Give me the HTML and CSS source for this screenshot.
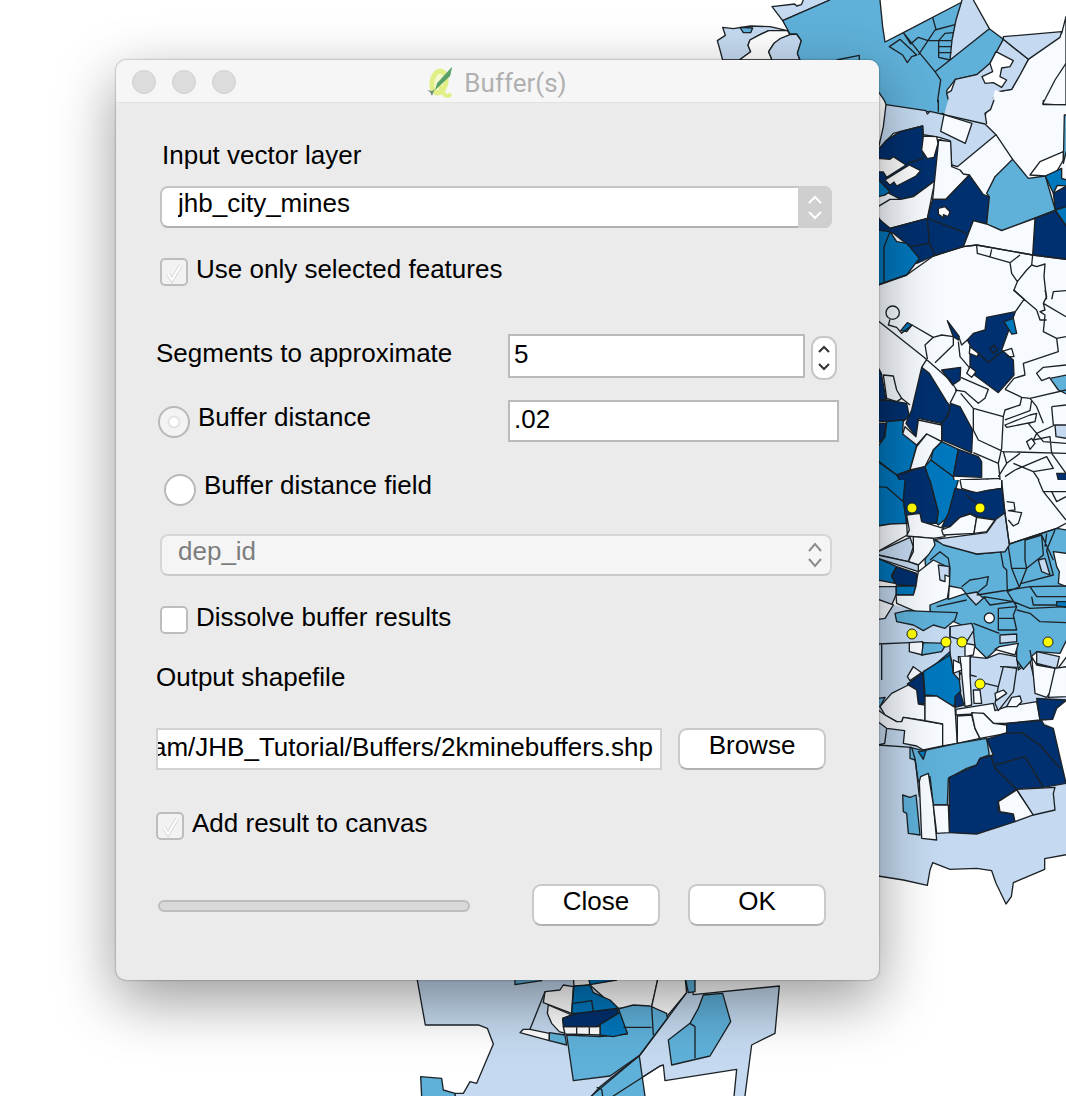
FILE: index.html
```html
<!DOCTYPE html>
<html lang="en">
<head>
<meta charset="utf-8">
<title>Buffer(s)</title>
<link rel="stylesheet" href="styles.css">
</head>
<body>
<main class="desktop">
<svg class="map" viewBox="0 0 1066 1096" preserveAspectRatio="xMinYMin slice" aria-hidden="true">
  <!-- north-west wards -->
  <g transform="translate(700 0) scale(.33333)">
    <path class="a" d="M985 178 1085 100 1098 50V390H850L860 320 895 275 935 268Z"/>
    <path class="b" d="M68 82 100 86 152 78 210 80 262 92 206 92 180 104 150 120 144 136 152 155 118 180H68L60 150 52 122 76 106Z"/>
    <path class="w" d="M262 92 206 92 180 104 150 120 144 136 152 155 118 180H216L206 155 222 130 270 104Z"/>
    <path class="b" d="M270 104 240 116 222 130 206 155 216 180H300L292 160 304 122 290 102Z"/>
    <path class="b" d="M310 0 304 14 290 18 284 12 216 20 248 62 390 0"/>
    <path class="c" d="M120 82 130 98H152L158 84Z"/>
    <path class="c" d="M390 0 248 62 270 102 290 102 304 122 292 160 300 180 535 275 552 300 560 316 735 342 748 310 740 272 766 238 830 224 860 200 880 180 910 118 868 86 786 6 610 98 555 126 548 80 540 0"/>
    <path class="b" d="M786 0 768 60 756 120 750 180 868 86 820 0"/>
    <path class="b" d="M910 118 985 178 960 225 935 268 895 275 860 320 850 375 735 342 748 310 740 280 754 272 766 238 830 224 870 190Z"/>
    <path class="b" d="M910 110 1085 95 1080 112 985 178 910 118Z"/>
    <path class="w" d="M888 155 940 182 930 200 905 204 900 230 920 240 905 262 880 248 855 250 846 230 878 215 870 190Z"/>
    <path class="n" d="M1098 190 1065 240 1028 312 1098 316M698 52 708 88M610 98 660 160 705 215 722 240 708 335M568 140 600 118 650 165 635 170 622 188 608 165ZM705 215 750 180M610 98 632 132 655 112 684 122 655 165M684 122H755M684 122 705 90 765 74M716 122V172L750 180M716 140H755M716 158H755M716 122 735 100 760 98M410 180 478 166V180"/>
  </g>
  <!-- northern wards -->
  <g transform="translate(870 100) scale(.33333)">
    <path class="a f" d="M24 150V610H590V16H520L375 -30 350 72 160 90Z"/>
    <path class="c f" d="M48 14 54 0 200 0 215 40 168 32Z"/>
    <path class="b f" d="M236 -5 375 -5 362 28 345 40 350 72 222 44Z"/>
    <path class="b" d="M48 14 168 32 172 42 180 34 222 44 345 72 378 104 262 200 245 195 240 122 208 112 160 104 158 78 70 100 24 150 40 80Z"/>
    <path class="a" d="M222 44 306 70 286 130 212 94Z"/>
    <path class="e" d="M158 78 160 170 206 120H215L200 240 128 290 92 298 24 262V150L50 120 90 95Z"/>
    <path class="w" d="M160 108 200 110 204 130 192 172 172 176 155 150Z"/>
    <path class="w" d="M24 175 60 178 70 170 108 195 50 232 40 216 24 215Z"/>
    <path class="w" d="M45 240 118 195 152 212 138 228 80 258 72 246 60 256Z"/>
    <path class="d" d="M24 238 60 275 45 285 24 290Z"/>
    <path class="a" d="M24 320 60 298 92 298 130 290 195 242 172 355 60 385 40 375 24 350Z"/>
    <path class="a" d="M206 120 242 125 245 200 270 210 280 222 298 225 228 298H188Z"/>
    <path class="e" d="M298 225 340 284 358 290 350 372 310 362 280 440 190 468 140 490 120 440 70 400 24 390V355L60 385 172 355 188 298H228Z"/>
    <path class="w" d="M205 325 225 320 240 335 234 350 220 344 222 355 205 342Z"/>
    <path class="d" d="M24 390 60 395 80 425 110 430 148 475 110 525 24 555Z"/>
    <path class="c" d="M428 178 475 235 526 228 556 330 395 392 350 372 358 290 350 280 375 230Z"/>
    <path class="w" d="M580 155 510 185 480 225 526 228 560 215 580 180Z"/>
    <path class="c" d="M583 45H590V150L580 190Z"/>
    <path class="d" d="M526 228 575 205 575 235 590 240V258L562 256 550 280Z"/>
    <path class="e" d="M550 280 590 258V320L556 330Z"/>
    <path class="d" d="M556 330 590 320V380Z"/>
    <path class="e" d="M495 355 556 332 590 380V478L488 465Z"/>
    <path class="a" d="M310 362 350 372 395 392 495 355 488 465 320 435 280 440Z"/>
    <path class="n" d="M350 72 345 40 362 28 372 0M172 355 290 400M172 355 178 430 195 465M120 440 178 430M60 395 42 440V545M378 104 428 178M24 555 110 525 190 468 280 440 320 435 488 465 588 478M320 437 322 460 420 488 450 465M365 448 360 470M420 488 425 520 442 545 470 510 485 495 488 465M442 545 432 570 465 600M485 495 500 500 525 492 522 530 530 600M545 600 550 575 588 572M520 0V14H588M110 190 160 175M205 0V35"/>
  </g>
  <!-- central wards -->
  <g transform="translate(870 290) scale(.33333)">
    <path class="a f" d="M24 28H590V610H24Z"/>
    <circle class="n" cx="68" cy="68" r="20"/>
    <path class="d" d="M92 122 112 98 126 105 110 125Z"/>
    <path class="e" d="M232 92 268 140 265 150 250 140Z"/>
    <path class="e" d="M436 65 420 110 395 180 430 210 432 255 385 308 300 245 300 165 292 150 310 130 345 120 350 82Z"/>
    <path class="w" d="M300 170 325 190 322 200 298 190Z"/>
    <path class="w" d="M300 230 318 245 305 262 290 250Z"/>
    <path class="d" d="M402 95 430 85 440 130 425 132Z"/>
    <path class="e" d="M215 240 272 232 270 270 248 285Z"/>
    <path class="c" d="M540 265 590 255V312L565 300Z"/>
    <path class="e" d="M24 232 34 250 48 330H24Z"/>
    <path class="a" d="M40 255 70 258 80 300 95 325 80 335 50 325Z"/>
    <path class="e" d="M24 332 48 330 110 340 118 380 98 395H24Z"/>
    <path class="e" d="M155 232 178 250 230 335 242 350 225 395 212 400 145 385 138 440 108 400 125 360Z"/>
    <path class="e" d="M242 340 270 350 308 420 305 488 216 450 215 400 235 375Z"/>
    <path class="e" d="M24 400H48L42 445 24 460Z"/>
    <path class="d" d="M50 395 100 390 98 425 140 465 120 540 80 555 24 512V470L45 440Z"/>
    <path class="a" d="M145 390 215 405V455L170 432 140 465 98 432 105 410 138 440Z"/>
    <path class="a" d="M170 432 215 455 190 480 165 530 120 540 140 470Z"/>
    <path class="d" d="M215 455 265 478 250 560 182 510 190 480Z"/>
    <path class="e" d="M265 478 325 500 335 515V562L250 558Z"/>
    <path class="d" d="M24 515 80 555 110 600H24Z"/>
    <path class="e" d="M110 605 80 555 165 530 190 605"/>
    <path class="d" d="M190 605 165 530 182 510 250 560 260 605"/>
    <path class="b" d="M555 405H590V445L558 440Z"/>
    <path class="e" d="M560 550H590V572L565 570Z"/>
    <path class="n" d="M24 92 160 200 240 270 260 300 240 340M60 88 55 105 80 112 95 130 126 105 190 142 165 165 172 205 155 232M190 142 215 135 250 140V165L195 218M268 145 275 165 292 150M325 188 355 218 395 185M360 175 372 165 382 180 370 190ZM395 185 425 175 432 200 410 200M265 155 270 200 300 235M272 262 355 298 345 325 325 340 285 305 255 300M436 65 462 28 430 0M462 28 500 60 510 90 530 90M525 0 530 20 520 40 588 80M520 40 525 60 510 65 525 75 520 125 560 145 588 140M560 145 565 185 460 220 465 255 432 265 405 298M588 225 520 232 500 250 515 272 540 262M95 325 120 345M272 310 310 355V420L325 450 400 485 588 490M310 355 400 380 395 475 385 520 310 488M385 520 390 565 270 570M405 298 455 322 480 325 588 300M455 322 450 345 405 360 400 380M405 390 480 362 485 330M405 405 480 375 500 370 495 395 410 412ZM495 395 475 400 500 430 555 405M500 430 490 450 540 440 545 490M470 455 485 445 495 460 480 478ZM400 485 410 520 385 560M410 520 450 490M430 520 490 545 550 535 530 500 435 540 405 560M545 490 588 550M490 545 510 575 550 600M390 565V600M545 350 588 345M545 350 550 405M350 568 390 600M480 325 500 350 520 400M500 430 520 455 588 460"/>
  </g>
  <!-- inner city wards -->
  <g transform="translate(870 480) scale(.33333)">
    <path class="a f" d="M395 0H590V130L418 192 405 100Z"/>
    <path class="b f" d="M24 418 70 375 180 400 240 440 310 430V610H24Z"/>
    <path class="d" d="M110 0 100 60 110 130 24 138V0"/>
    <path class="e" d="M180 0 205 95 200 130H110L100 60 105 0"/>
    <path class="d" d="M265 0 255 35 235 110 205 135 200 130 205 95 180 0"/>
    <path class="a" d="M270 0 275 25 320 40 350 32 395 25V0"/>
    <path class="e" d="M255 25 320 38 350 32 395 25 405 100 375 120 320 110 300 100 270 112 240 140 215 142 235 100Z"/>
    <path class="a" d="M24 138 60 132 110 130 112 165 50 200 24 215Z"/>
    <path class="a" d="M110 105 150 100 155 125 220 145 225 170 190 175 110 168 118 150Z"/>
    <path class="a" d="M215 150 240 140 270 112 300 102 320 112 312 160 220 165Z"/>
    <path class="a" d="M320 112 375 120 350 155 312 160Z"/>
    <path class="b" d="M24 215 120 172 130 200 115 245 24 225Z"/>
    <path class="c" d="M190 180 320 222 405 215 418 192 560 145 590 150V480L570 520 500 515 440 570 440 500 388 500 350 535 315 500 310 450 180 395 165 240Z"/>
    <path class="b" d="M195 178 350 158 378 118 405 98 418 195 405 215 320 222 220 195Z"/>
    <path class="a" d="M130 170 190 175 195 195 175 225 145 255 115 245 130 215Z"/>
    <path class="b" d="M24 225 115 245 145 255 145 275 24 235Z"/>
    <path class="d" d="M24 235 80 260 65 285 75 310 24 300Z"/>
    <path class="e" d="M80 260 140 280V318L80 315 65 290Z"/>
    <path class="d" d="M78 318H138L130 345H78Z"/>
    <path class="b" d="M24 320H78V345L65 375 24 358Z"/>
    <path class="a" d="M145 275 190 240 240 265 238 318 232 355 180 375V395L150 400 80 370 78 345 130 345 138 318 142 290Z"/>
    <path class="b" d="M205 255 238 260 238 290 225 285 225 305 210 300Z"/>
    <path class="a" d="M238 318 275 325 288 340 235 358Z"/>
    <path class="a" d="M24 358 70 375 45 415 24 418Z"/>
    <path class="c" d="M75 400 110 392 180 395 262 398 255 420 225 445 190 435 160 452 130 435 80 425Z"/>
    <path class="b" d="M288 342 320 336 340 355 318 375Z"/>
    <path class="b" d="M505 240 525 235 540 285 515 275Z"/>
    <path class="a" d="M550 215 590 220V320L565 310 568 275 560 260Z"/>
    <path class="d" d="M560 365H590V382L560 378Z"/>
    <path class="b" d="M240 440 305 430 312 450 290 485 240 470Z"/>
    <path class="b" d="M300 605V530L350 535 388 520 440 530 445 570 480 545 495 605"/>
    <path class="a" d="M388 500 445 490 435 525 375 508Z"/>
    <path class="b" d="M390 465 440 462V485L390 490Z"/>
    <path class="b" d="M500 515 568 530 560 565 500 550Z"/>
    <path class="a" d="M495 605 488 550 540 562 560 570 590 530V605"/>
    <path class="a" d="M118 488 158 485V525L118 515Z"/>
    <path class="c" d="M160 488 230 490 215 515 155 525Z"/>
    <path class="d" d="M160 605 165 575 200 550 240 515 250 605"/>
    <path class="a" d="M285 490 315 495 310 525 285 530Z"/>
    <path class="a" d="M270 605 265 530H300V605"/>
    <path class="n" d="M465 180V240L470 265 448 322 425 265 415 200M465 180 515 165 520 225 470 265M515 165 550 240M530 160 525 200M555 150 530 210 550 285 455 310M425 265H470M392 215 400 260 410 270 412 335 445 322M320 345 480 320 588 318M340 350 430 365 480 385 588 380M480 320 500 350H588M485 350 490 375H560M275 320 300 300 330 295 355 290 350 315 320 340M200 380 290 360M340 350 360 375 430 365M385 385 440 380 430 405 440 450H385ZM385 415H430M440 390 480 400 510 425 588 428M412 335 440 380M240 265 235 235 210 215 180 240M24 20 50 22 100 65M288 45 320 70M505 0 520 35 588 120M520 35H588M545 35 560 65 588 50M395 0 405 100 418 192 560 145 588 130M410 65 432 68 435 90 415 92 455 98 445 130 430 138 415 120M24 492 118 488M35 492V600M250 540 280 560 270 585M130 560 120 580M390 560 440 562 430 600M310 430 388 460M240 440V515"/>
    <circle class="w" cx="358" cy="414" r="15"/>
  </g>
  <!-- southern wards -->
  <g transform="translate(870 660) scale(.33333)">
    <path class="b f" d="M24 648 100 660 172 676 180 630 188 608 240 628 320 625 365 632 378 670 408 732 424 710 430 668 524 628V596L590 584V60H24Z"/>
    <path class="n" d="M24 648 100 660 172 676 180 630 188 608 240 628 320 625 365 632 378 670 408 732 424 710 430 668 524 628V596L590 584"/>
    <path class="w f" d="M515 182 550 178 560 150 590 120V370L550 205Z"/>
    <path class="d" d="M160 35 240 -15 245 5 250 40 268 60 272 95 250 140 200 108 165 105Z"/>
    <path class="e" d="M112 72 158 38 165 130 145 132 140 90Z"/>
    <path class="e" d="M255 110 270 95 282 135 255 142Z"/>
    <path class="a" d="M112 50 130 20 155 38 120 62Z"/>
    <path class="c" d="M24 115 45 112 30 140 24 140Z"/>
    <path class="a" d="M30 140 65 100 115 75 140 90 145 132 165 135V182L100 172 95 185 80 185 45 165Z"/>
    <path class="a" d="M24 150 45 165 80 185 95 185 100 172 218 192V258L160 270 140 258 100 250 104 212 50 205 24 185Z"/>
    <path class="a" d="M165 108 200 108 255 142 262 250 218 258V192L165 182Z"/>
    <path class="a" d="M262 168 305 165 315 205 330 235 262 250Z"/>
    <path class="a" d="M258 148 370 130 375 152 410 140 500 125 510 180 410 190H370L340 160 258 165Z"/>
    <path class="a" d="M305 158 340 160 370 190 410 195V220L330 235 315 205Z"/>
    <path class="a" d="M270 -10 285 140 305 135 300 45V-10"/>
    <path class="a" d="M250 0 272 10 275 30 250 40Z"/>
    <path class="a" d="M485 -10 500 15 555 25 552 80 530 112 495 100Z"/>
    <path class="a" d="M555 25 590 20V110L535 112Z"/>
    <path class="c" d="M440 -30 440 0 460 28 485 0 480 -30"/>
    <path class="b" d="M385 80 400 20 440 25 430 95 385 152 375 130Z"/>
    <path class="a" d="M375 100 400 90 410 100 378 122Z"/>
    <path class="a" d="M410 140 425 112 450 108 455 125 440 140Z"/>
    <path class="a" d="M310 90H330L335 130H312Z"/>
    <path class="e" d="M500 115 590 120 560 145 548 178 510 180Z"/>
    <path class="c" d="M120 262 160 272 262 250 350 235 358 285 330 295 320 315 290 325 235 355 232 435H190L180 350 145 365 135 300 120 295Z"/>
    <path class="d" d="M145 275 168 272 160 298Z"/>
    <path class="e" d="M350 238 410 218V190L515 182 522 195 550 205 588 370 520 382 440 388 385 425V455L430 462 435 485 320 522 238 518V352L320 315 330 295 370 285Z"/>
    <path class="a" d="M440 390 490 465 435 485 430 462 390 455 385 425Z"/>
    <path class="b" d="M440 388 555 382 550 400 555 450 490 465Z"/>
    <path class="a" d="M148 365 152 350 175 340 190 435 200 540 155 535Z"/>
    <path class="c" d="M98 405 120 412 138 405 150 525 115 520 110 460 100 455Z"/>
    <path class="a" d="M190 435H235L238 518 200 520Z"/>
    <path class="n" d="M24 255 125 262 136 300 148 410M410 220 455 218 510 255 570 325M375 315 465 290 520 382M362 285 375 325 440 388M345 70 385 80M24 255 44 250 50 205M300 45 320 50"/>
  </g>
  <!-- far southern wards -->
  <g transform="translate(400 970) scale(.33333)">
    <path class="b" d="M50 20 76 165H235L262 175 280 222 230 340 210 335 190 370H165V400H1032L1055 225 1125 190 1138 48 880 74 870 20Z"/>
    <path class="w" d="M640 400 638 378 780 288 790 285 795 332 1010 298 1000 400Z"/>
    <path class="c" d="M62 320 125 325 130 360 165 370V400H66Z"/>
    <path class="w" d="M520 20H775L755 110 650 115 620 90 570 45 522 50Z"/>
    <path class="w" d="M775 20H855L860 68 800 140 755 110Z"/>
    <path class="w" d="M435 65 480 60 490 45 520 50 515 130 430 98Z"/>
    <path class="w" d="M445 105 515 135 488 145 495 190 478 185 455 160 442 130Z"/>
    <path class="w" d="M360 188 370 178 390 178 448 190V212Z"/>
    <path class="c" d="M448 188 495 195 500 225 448 212Z"/>
    <path class="c" d="M500 195 600 200 682 192 650 118 700 105 750 108 800 130 802 145 720 255 630 318 520 332Z"/>
    <path class="c" d="M718 258 738 400H555L600 350 650 310Z"/>
    <path class="d" d="M522 48 570 45 580 68 630 90 655 115 682 190 640 200 600 195V165L570 130 515 130Z"/>
    <path class="w" d="M490 170H600V195L495 192Z"/>
    <path class="e" d="M488 145 530 130 650 115 655 130 590 170H490Z"/>
    <path class="c" d="M345 20V44L425 32V20Z"/>
    <path class="d" d="M565 20 570 44 650 30V20Z"/>
    <path class="c" d="M855 20H885V65L865 68Z"/>
    <path class="c" d="M910 75 968 70 992 155 930 258 815 285 805 210 870 160 895 115Z"/>
    <path class="n" d="M435 65 390 178M530 172V195M568 172V195M520 100 575 92 580 125M755 110 760 195M670 172H755M860 68 720 255 560 390M780 288 640 378 600 400M870 160 885 170V265M590 352 605 358 608 378"/>
  </g>
  <g class="mines">
    <circle cx="912" cy="508" r="5"/><circle cx="980" cy="508" r="5"/>
    <circle cx="912" cy="634" r="5"/><circle cx="946" cy="642" r="5"/>
    <circle cx="962" cy="642" r="5"/><circle cx="1048" cy="642" r="5"/>
    <circle cx="980" cy="684" r="5"/>
  </g>
</svg>

<section class="dialog" role="dialog" aria-labelledby="dialog-title">
  <header class="titlebar">
    <div class="lights">
      <button class="light" type="button" aria-label="Close window"></button>
      <button class="light" type="button" aria-label="Minimise window"></button>
      <button class="light" type="button" aria-label="Zoom window"></button>
    </div>
    <h1 class="title" id="dialog-title">
      <svg class="logo" viewBox="0 0 30 34" aria-hidden="true">
        <ellipse cx="13" cy="16" rx="7" ry="11" transform="rotate(12 13 16)" fill="#f4f8d0" stroke="#e2ef86" stroke-width="5"/>
        <path d="M13 19l5 9q3 4 7 0" fill="none" stroke="#e2ef86" stroke-width="4"/>
        <path d="M26 1l-2 9-14 13 1-6z" fill="#7fbd7c"/>
        <path d="M26 1l-15 17-2 6 15-14z" fill="#57a069"/>
        <path d="M1 24l5 1 3-2-2 4-1 3-2-4z" fill="#6d8f7c"/>
      </svg>
      Buffer(s)
    </h1>
  </header>

  <form class="form">
    <label class="text inset" for="layer">Input vector layer</label>
    <div class="combo after-label">
      <select class="combo-box" id="layer"><option>jhb_city_mines</option></select>
      <svg class="combo-arrows solid" viewBox="0 0 32 38" aria-hidden="true"><path d="M10 15l6-6 6 6M10 24l6 6 6-6"/></svg>
    </div>

    <div class="option option-in first-option">
      <span class="tick"><input class="check" type="checkbox" id="selected" checked><svg class="mark" viewBox="0 0 28 28" aria-hidden="true"><path class="mark-edge" d="M8 16l4 6 9-15"/><path d="M8 16l4 6 9-15"/></svg></span>
      <label class="text" for="selected">Use only selected features</label>
    </div>

    <div class="fields">
      <label class="text field-name" for="segments">Segments to approximate</label>
      <div class="spin">
        <input class="line tall" id="segments" type="text" value="5">
        <button class="stepper" type="button" aria-label="Change segments">
          <svg viewBox="0 0 22 40" aria-hidden="true"><path d="M6 14l5-5 5 5M6 26l5 5 5-5"/></svg>
        </button>
      </div>
      <div class="option option-radio">
        <input class="radio dim" type="radio" name="mode" id="by-distance" checked>
        <label class="text" for="by-distance">Buffer distance</label>
      </div>
      <input class="line" type="text" value=".02" aria-label="Buffer distance value">
    </div>

    <div class="option option-field">
      <input class="radio" type="radio" name="mode" id="by-field">
      <label class="text" for="by-field">Buffer distance field</label>
    </div>
    <div class="combo after-radio">
      <select class="combo-box" aria-label="Distance field" disabled><option>dep_id</option></select>
      <svg class="combo-arrows" viewBox="0 0 32 38" aria-hidden="true"><path d="M10 15l6-7 6 7M10 23l6 7 6-7"/></svg>
    </div>

    <div class="option option-in">
      <span class="tick"><input class="check" type="checkbox" id="dissolve"></span>
      <label class="text" for="dissolve">Dissolve buffer results</label>
    </div>

    <label class="text output-name" for="output">Output shapefile</label>
    <div class="output">
      <input class="line path" type="text" id="output" value="am/JHB_Tutorial/Buffers/2kminebuffers.shp">
      <button class="button wide" type="button">Browse</button>
    </div>

    <div class="option add-result">
      <span class="tick"><input class="check" type="checkbox" id="canvas" checked><svg class="mark" viewBox="0 0 28 28" aria-hidden="true"><path class="mark-edge" d="M8 16l4 6 9-15"/><path d="M8 16l4 6 9-15"/></svg></span>
      <label class="text" for="canvas">Add result to canvas</label>
    </div>

    <div class="actions">
      <progress class="progress" max="100" value="0" aria-label="Progress"></progress>
      <button class="button" type="button">Close</button>
      <button class="button ok" type="button">OK</button>
    </div>
  </form>
</section>
</main>
</body>
</html>
```
FILE: styles.css
```css
* {
  box-sizing: border-box;
}

body {
  margin: 0;
  background: #fff;
  color: #000;
  font: 26px/30px "Liberation Sans", Arial, sans-serif;
}

button,
input,
select {
  margin: 0;
  color: inherit;
  font: inherit;
}

.desktop {
  position: relative;
  min-height: 100vh;
  padding: 60px 187px 60px 116px;
  overflow: hidden;
}

/* Map canvas behind the dialog */
.map {
  position: absolute;
  inset: 0;
  width: 100%;
  height: 100%;
}

.map path,
.map g > circle {
  stroke: #1c2226;
  stroke-width: 4;
  stroke-linejoin: round;
}

.map .a { fill: #f7fbff; }
.map .b { fill: #c5daf0; }
.map .c { fill: #5fb1da; }
.map .d { fill: #0078be; }
.map .e { fill: #00306f; }
.map .w { fill: #fff; }
.map .n { fill: none; }
.map .f { stroke: none; }

.map .mines circle {
  fill: #ff0;
  stroke-width: 1;
}

/* Dialog window */
.dialog {
  position: relative;
  max-width: 763px;
  border-radius: 10px;
  background: #ebebeb;
  box-shadow: 0 0 2px rgba(0, 0, 0, .5), 0 20px 60px rgba(0, 0, 0, .4);
}

.titlebar {
  display: grid;
  grid-template-columns: 1fr auto 1fr;
  align-items: center;
  height: 43px;
  padding: 0 16px;
  border-bottom: 1px solid #e2e2e2;
  border-radius: 10px 10px 0 0;
  background: #f6f6f6;
}

.lights {
  display: flex;
  gap: 16px;
  padding-top: 2px;
}

.light {
  width: 24px;
  height: 24px;
  padding: 0;
  border: 1px solid #cfcfcf;
  border-radius: 50%;
  background: #dcdcdc;
}

.title {
  display: flex;
  align-items: center;
  gap: 8px;
  margin: 0;
  padding: 4px 2px 0 0;
  color: #b0b0b0;
  font: 26px/30px Roboto, sans-serif;
}

.logo {
  width: 30px;
  height: 34px;
}

.form {
  display: flex;
  flex-direction: column;
  padding: 37px 40px 54px;
}

.text {
  white-space: nowrap;
}

.inset {
  padding-left: 6px;
}

/* Drop-downs */
.combo {
  display: grid;
  grid-template-columns: 1fr 34px;
  margin: 0 7px 0 4px;
}

.after-label { margin-top: 16px; }
.after-radio { margin-top: 28px; }

.combo-box {
  grid-area: 1 / 1 / 2 / 3;
  height: 42px;
  padding: 0 36px 8px 16px;
  border: 2px solid #c4c4c4;
  border-bottom-color: #b0b0b0;
  border-radius: 8px;
  background: #fff;
  appearance: none;
}

.combo-box:disabled {
  border-color: #d6d6d6;
  border-bottom-color: #cacaca;
  background: #f5f5f5;
  color: #7d7d7d;
  opacity: 1;
}

.combo-arrows {
  grid-area: 1 / 2;
  z-index: 1;
  width: 34px;
  height: 42px;
  padding: 2px 1px;
  border-radius: 0 8px 8px 0;
  fill: none;
  stroke: #8c8c8c;
  stroke-width: 2;
  pointer-events: none;
}

.combo-arrows.solid {
  background: #cfcfcf;
  stroke: #fff;
}

/* Tick boxes and radio buttons */
.option {
  display: flex;
  align-items: flex-start;
  gap: 8px;
}

.option-in {
  margin-top: 26px;
  padding-left: 4px;
}

.tick {
  display: grid;
  margin-top: 4px;
}

.check,
.mark {
  grid-area: 1 / 1;
  width: 28px;
  height: 28px;
}

.check {
  border: 2px solid #bdbdbd;
  border-radius: 5px;
  background: #fff;
  appearance: none;
}

.check:checked {
  background: #f2f2f2;
}

.mark {
  z-index: 1;
  fill: none;
  stroke: #fff;
  stroke-width: 2;
  pointer-events: none;
}

.mark-edge {
  stroke: #dadada;
  stroke-width: 4;
}

.radio {
  width: 32px;
  height: 32px;
  margin-top: 4px;
  border: 2px solid #b8b8b8;
  border-radius: 50%;
  background: #fff;
  appearance: none;
}

.radio.dim {
  background: radial-gradient(circle, #fff 4px, #ddd 5px, #f3f3f3 7px);
}

.option-radio {
  padding: 2px 0 0 2px;
}

.option-field {
  margin-top: 28px;
  padding-left: 8px;
}

/* Segment and distance fields */
.fields {
  display: grid;
  grid-template-columns: 352px minmax(0, 1fr);
  row-gap: 20px;
  margin-top: 48px;
}

.field-name {
  padding-top: 4px;
}

.spin {
  display: flex;
  align-items: flex-start;
  gap: 6px;
  padding-right: 2px;
}

.line {
  flex: 1;
  min-width: 0;
  height: 42px;
  padding: 0 4px 4px;
  border: 2px solid #bababa;
  border-radius: 0;
  background: #fff;
}

.tall {
  height: 44px;
}

.stepper {
  width: 26px;
  height: 44px;
  margin-top: 2px;
  padding: 0;
  border: 2px solid #c6c6c6;
  border-radius: 11px;
  background: #fff;
}

.stepper svg {
  display: block;
  width: 100%;
  fill: none;
  stroke: #333;
  stroke-width: 2;
}

/* Output file */
.output-name {
  margin-top: 28px;
}

.output {
  display: flex;
  gap: 16px;
  margin: 36px 13px 0 0;
}

.path {
  padding: 0 0 4px;
  border-color: #d2d2d2;
  text-indent: -6px;
}

.button {
  width: 128px;
  height: 42px;
  padding: 0 0 8px;
  border: 2px solid #c9c9c9;
  border-bottom-color: #b2b2b2;
  border-radius: 9px;
  background: #fff;
}

.wide {
  width: 148px;
}

.add-result {
  margin-top: 38px;
}

/* Progress and closing buttons */
.actions {
  display: flex;
  align-items: center;
  gap: 28px;
  margin: 44px 13px 0 2px;
}

.progress {
  flex: 1;
  max-width: 312px;
  height: 12px;
  margin: 2px auto 0 0;
  border: 2px solid #bdbdbd;
  border-radius: 6px;
  background: #d9d9d9;
  appearance: none;
}

.progress::-webkit-progress-bar {
  background: transparent;
}

.ok {
  width: 138px;
}
```
